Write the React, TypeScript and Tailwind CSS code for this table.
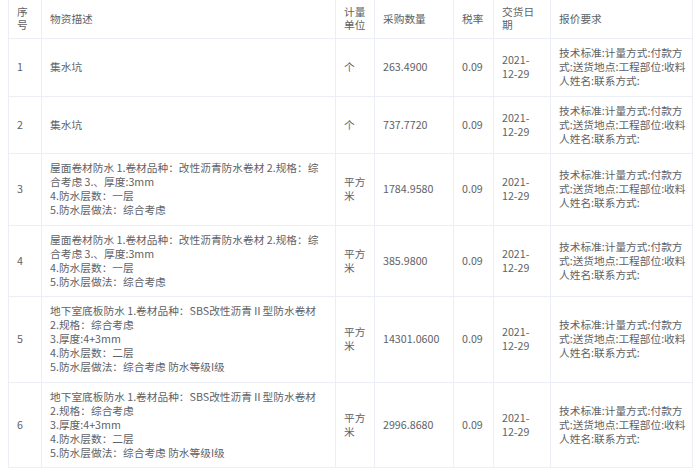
import React from "react";

interface Item {
  no: number;
  desc: string;
  unit: string;
  qty: string;
  tax: string;
  date: string;
  req: string;
}

const REQ = "技术标准:计量方式:付款方式:送货地点:工程部位:收料人姓名:联系方式:";

const items: Item[] = [
  { no: 1, desc: "集水坑", unit: "个", qty: "263.4900", tax: "0.09", date: "2021-12-29", req: REQ },
  { no: 2, desc: "集水坑", unit: "个", qty: "737.7720", tax: "0.09", date: "2021-12-29", req: REQ },
  {
    no: 3,
    desc: "屋面卷材防水 1.卷材品种：改性沥青防水卷材 2.规格：综合考虑 3.、厚度:3mm\n4.防水层数：一层\n5.防水层做法：综合考虑",
    unit: "平方米",
    qty: "1784.9580",
    tax: "0.09",
    date: "2021-12-29",
    req: REQ,
  },
  {
    no: 4,
    desc: "屋面卷材防水 1.卷材品种：改性沥青防水卷材 2.规格：综合考虑 3.、厚度:3mm\n4.防水层数：一层\n5.防水层做法：综合考虑",
    unit: "平方米",
    qty: "385.9800",
    tax: "0.09",
    date: "2021-12-29",
    req: REQ,
  },
  {
    no: 5,
    desc: "地下室底板防水 1.卷材品种：SBS改性沥青Ⅱ型防水卷材\n2.规格：综合考虑\n3.厚度:4+3mm\n4.防水层数：二层\n5.防水层做法：综合考虑 防水等级I级",
    unit: "平方米",
    qty: "14301.0600",
    tax: "0.09",
    date: "2021-12-29",
    req: REQ,
  },
  {
    no: 6,
    desc: "地下室底板防水 1.卷材品种：SBS改性沥青Ⅱ型防水卷材\n2.规格：综合考虑\n3.厚度:4+3mm\n4.防水层数：二层\n5.防水层做法：综合考虑 防水等级I级",
    unit: "平方米",
    qty: "2996.8680",
    tax: "0.09",
    date: "2021-12-29",
    req: REQ,
  },
];

const headers = ["序号", "物资描述", "计量单位", "采购数量", "税率", "交货日期", "报价要求"];
const widths = ["w-[33px]", "w-[294px]", "w-[39px]", "w-[79px]", "w-[40px]", "w-[57px]", "w-[142px]"];

const th = "border border-[#ebeef5] px-[8px] pt-[5px] pb-[7px] text-left font-normal align-middle leading-[13px] break-all";
const td = "border border-[#ebeef5] px-[8px] pt-[7px] pb-[7.5px] align-middle leading-[14px]";

export default function App() {
  return (
    <div
      className="bg-white min-h-[469px] px-[8px] text-[10.7px] text-[#606266]"
      style={{ fontFamily: '"Noto Sans CJK SC", "Noto Sans", sans-serif' }}
    >
      <table className="table-fixed border-collapse w-[684px]">
        <colgroup>
          {widths.map((w, i) => (
            <col key={i} className={w} />
          ))}
        </colgroup>
        <thead>
          <tr>
            {headers.map((h) => (
              <th key={h} className={`${th} border-t-0`}>
                {h}
              </th>
            ))}
          </tr>
        </thead>
        <tbody>
          {items.map((it) => (
            <tr key={it.no}>
              <td className={td}>{it.no}</td>
              <td className={`${td} whitespace-pre-line`}>{it.desc}</td>
              <td className={`${td} break-all`}>{it.unit}</td>
              <td className={td}>{it.qty}</td>
              <td className={td}>{it.tax}</td>
              <td className={td}>{it.date}</td>
              <td className={`${td} break-all !pr-[4px]`}>{it.req}</td>
            </tr>
          ))}
        </tbody>
      </table>
    </div>
  );
}
